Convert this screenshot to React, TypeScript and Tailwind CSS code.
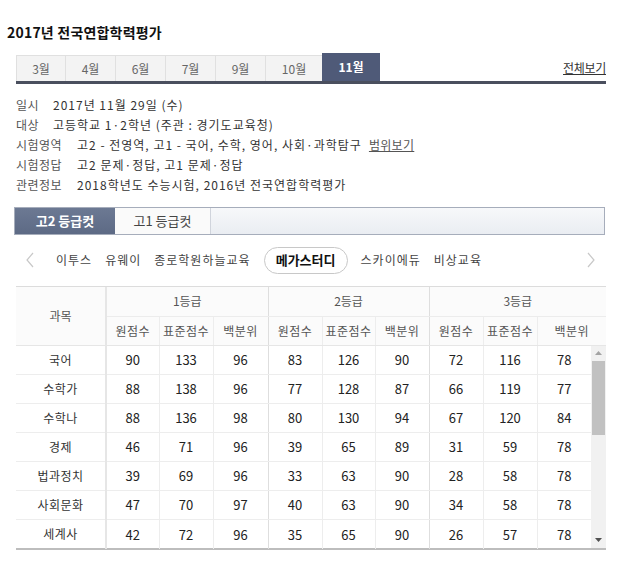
import React from "react";

const months = [
  { label: "3월", w: "w-[49px]" },
  { label: "4월", w: "w-[50px]" },
  { label: "6월", w: "w-[50px]" },
  { label: "7월", w: "w-[50px]" },
  { label: "9월", w: "w-[50px]" },
  { label: "10월", w: "w-[57px]" },
];

const info = [
  { k: "일시", v: "2017년 11월 29일 (수)", w: "w-[37px]" },
  { k: "대상", v: "고등학교 1·2학년 (주관 : 경기도교육청)", w: "w-[37px]" },
  { k: "시험영역", v: "고2 - 전영역, 고1 - 국어, 수학, 영어, 사회·과학탐구", w: "w-[61px]", link: "범위보기" },
  { k: "시험정답", v: "고2 문제·정답, 고1 문제·정답", w: "w-[61px]" },
  { k: "관련정보", v: "2018학년도 수능시험, 2016년 전국연합학력평가", w: "w-[61px]" },
];

const academies = ["이투스", "유웨이", "종로학원하늘교육", "메가스터디", "스카이에듀", "비상교육"];

const rows: [string, number[]][] = [
  ["국어", [90, 133, 96, 83, 126, 90, 72, 116, 78]],
  ["수학가", [88, 138, 96, 77, 128, 87, 66, 119, 77]],
  ["수학나", [88, 136, 98, 80, 130, 94, 67, 120, 84]],
  ["경제", [46, 71, 96, 39, 65, 89, 31, 59, 78]],
  ["법과정치", [39, 69, 96, 33, 63, 90, 28, 58, 78]],
  ["사회문화", [47, 70, 97, 40, 63, 90, 34, 58, 78]],
  ["세계사", [42, 72, 96, 35, 65, 90, 26, 57, 78]],
];

const colW = ["w-[90px]", "w-[53px]", "w-[54px]", "w-[55px]", "w-[54px]", "w-[53px]", "w-[54px]", "w-[54px]", "w-[54px]", "w-[54px]"];

// column divider: thicker line between grade groups
const divider = (i: number) =>
  i === 2 || i === 5 ? "border-r border-r-[#dedede]" : i === 8 ? "" : "border-r border-r-[#ededed]";

export default function App() {
  return (
    <div
      className="w-[640px] h-[561px] bg-white text-[12px] text-[#333] overflow-hidden"
      style={{ fontFamily: '"Noto Sans CJK KR", "Noto Sans", sans-serif' }}
    >
      {/* Title */}
      <h1 className="pt-[22px] pl-[7px] text-[14px] font-bold text-[#111] leading-[20px] tracking-[0.2px]">
        2017년 전국연합학력평가
      </h1>

      {/* Month tabs */}
      <div className="mt-[11px] mx-[16px] w-[590px] flex items-end border-b-[3px] border-[#4a4f5e]">
        {months.map((m) => (
          <div
            key={m.label}
            className={`${m.w} h-[26px] flex items-center justify-center bg-[#f3f3f3] border-l border-t border-[#e0e0e0] text-[#666] text-[12px]`}
          >
            {m.label}
          </div>
        ))}
        <div className="w-[58px] h-[28px] flex items-center justify-center bg-[#4f5a78] text-white font-bold text-[12px]">
          11월
        </div>
        <div className="flex-1 h-[26px] flex items-center justify-end">
          <span className="underline text-[#333] text-[12px] tracking-[-0.3px]">전체보기</span>
        </div>
      </div>

      {/* Info */}
      <div className="mt-[11px] pl-[16px] flex flex-col">
        {info.map((r) => (
          <div key={r.k} className="h-[20px] flex items-center text-[12px]">
            <span className={`${r.w} text-[#555] tracking-[0.5px]`}>{r.k}</span>
            <span className="text-[#333] tracking-[1px]">{r.v}</span>
            {r.link && <span className="ml-[7px] underline text-[#555] tracking-[0.3px]">{r.link}</span>}
          </div>
        ))}
      </div>

      {/* Grade tabs */}
      <div className="mt-[12px] ml-[14px] w-[591px] h-[28px] flex border border-[#a6adbb] bg-gradient-to-b from-[#f7f8fa] to-[#eaedf2]">
        <div className="w-[100px] flex items-center justify-center bg-gradient-to-b from-[#6c7993] to-[#5d6a85] text-white font-bold text-[13px]">
          고2 등급컷
        </div>
        <div className="w-[96px] flex items-center justify-center bg-[#fafafa] border-r border-[#d0d4dc] text-[#444] text-[13px]">
          고1 등급컷
        </div>
      </div>

      {/* Academy selector */}
      <div className="mt-[11px] h-[28px] flex items-center">
        <svg className="ml-[25px] w-[10px] h-[16px]" viewBox="0 0 10 16">
          <path d="M8 1 L2 8 L8 15" fill="none" stroke="#c8c8c8" strokeWidth="1.2" />
        </svg>
        <div className="ml-[21px] flex items-center gap-[13px] text-[12px] text-[#444] tracking-[1px]">
          {academies.map((a) =>
            a === "메가스터디" ? (
              <span
                key={a}
                className="h-[27px] w-[84px] flex items-center justify-center rounded-full border border-[#c8c8c8] font-bold text-[#111] text-[13px] tracking-[0px]"
              >
                {a}
              </span>
            ) : (
              <span key={a}>{a}</span>
            )
          )}
        </div>
        <svg className="ml-auto mr-[44px] w-[10px] h-[16px]" viewBox="0 0 10 16">
          <path d="M2 1 L8 8 L2 15" fill="none" stroke="#c8c8c8" strokeWidth="1.2" />
        </svg>
      </div>

      {/* Table */}
      <div className="mt-[12px] ml-[16px] w-[590px] border-t border-[#dcdcdc] border-b-2 border-b-[#bdbdbd]">
        <table className="table-fixed border-collapse w-[590px] bg-[#fbfbfb] text-[#555]">
          <colgroup>
            {colW.map((w, i) => (
              <col key={i} className={i === 9 ? "w-[69px]" : w} />
            ))}
          </colgroup>
          <thead>
            <tr className="h-[29px]">
              <th rowSpan={2} className="font-normal border-r-2 border-[#e6e6e6] border-b border-b-[#e6e6e6]">과목</th>
              <th colSpan={3} className="font-normal border-r border-[#dedede] border-b border-b-[#ececec]">1등급</th>
              <th colSpan={3} className="font-normal border-r border-[#dedede] border-b border-b-[#ececec]">2등급</th>
              <th colSpan={3} className="font-normal border-b border-[#ececec]">3등급</th>
            </tr>
            <tr className="h-[29px]">
              {["원점수", "표준점수", "백분위", "원점수", "표준점수", "백분위", "원점수", "표준점수", "백분위"].map((h, i) => (
                <th key={i} className={`font-normal tracking-[0.5px] border-b border-[#e6e6e6] ${divider(i)}`}>
                  {h}
                </th>
              ))}
            </tr>
          </thead>
        </table>
        <div className="flex h-[202px]">
          <table className="table-fixed border-collapse w-[575px] text-[#222] text-[13px]">
            <colgroup>
              {colW.map((w, i) => (
                <col key={i} className={w} />
              ))}
            </colgroup>
            <tbody>
              {rows.map(([name, vals], ri) => {
                const rowLine = ri < rows.length - 1 ? "border-b border-b-[#ededed]" : "";
                return (
                  <tr key={name} className="h-[29px]">
                    <td className={`text-center text-[12px] text-[#333] tracking-[0.5px] border-r-2 border-[#e6e6e6] ${rowLine}`}>
                      {name}
                    </td>
                    {vals.map((v, i) => (
                      <td key={i} className={`text-center ${divider(i)} ${rowLine}`}>
                        {v}
                      </td>
                    ))}
                  </tr>
                );
              })}
            </tbody>
          </table>
          {/* Scrollbar */}
          <div className="w-[15px] h-[202px] bg-[#f1f1f1] flex flex-col items-center">
            <div className="h-[15px] w-full flex items-center justify-center">
              <svg width="7" height="4" viewBox="0 0 7 4">
                <path d="M0 4 L3.5 0 L7 4 Z" fill="#a3a3a3" />
              </svg>
            </div>
            <div className="w-[13px] h-[74px] bg-[#c1c1c1]" />
            <div className="flex-1" />
            <div className="h-[15px] w-full flex items-center justify-center">
              <svg width="7" height="4" viewBox="0 0 7 4">
                <path d="M0 0 L3.5 4 L7 0 Z" fill="#505050" />
              </svg>
            </div>
          </div>
        </div>
      </div>
    </div>
  );
}
